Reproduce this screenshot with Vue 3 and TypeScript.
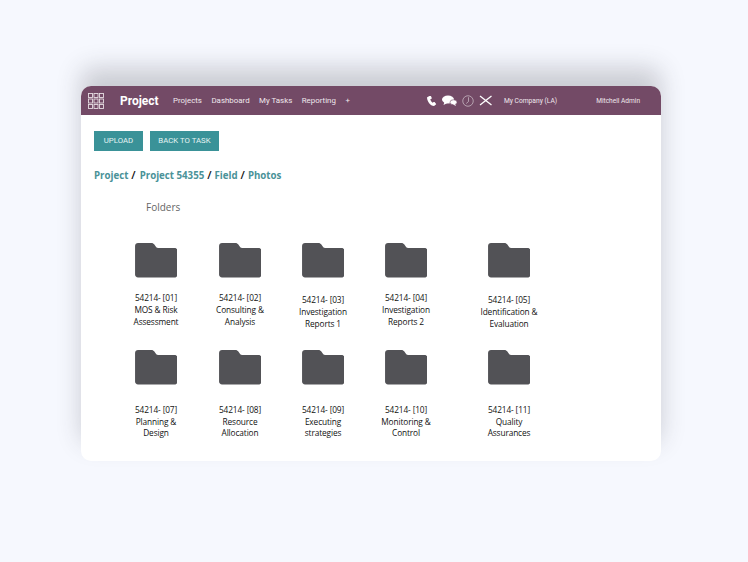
<script setup lang="ts">
interface Folder {
  code: string;
  lines: string[];
  shift?: boolean;
}

const navLinks = ["Projects", "Dashboard", "My Tasks", "Reporting", "+"];

const folders: Folder[] = [
  { code: "54214- [01]", lines: ["MOS & Risk", "Assessment"] },
  { code: "54214- [02]", lines: ["Consulting &", "Analysis"] },
  { code: "54214- [03]", lines: ["Investigation", "Reports 1"], shift: true },
  { code: "54214- [04]", lines: ["Investigation", "Reports 2"] },
  { code: "54214- [05]", lines: ["Identification &", "Evaluation"], shift: true },
  { code: "54214- [07]", lines: ["Planning &", "Design"] },
  { code: "54214- [08]", lines: ["Resource", "Allocation"] },
  { code: "54214- [09]", lines: ["Executing", "strategies"] },
  { code: "54214- [10]", lines: ["Monitoring &", "Control"] },
  { code: "54214- [11]", lines: ["Quality", "Assurances"] },
];
</script>

<template>
  <div class="page">
    <div class="card">
      <header class="navbar">
        <svg class="apps" width="16" height="16" viewBox="0 0 16 16" fill="none" stroke="#e6dde3" stroke-width="0.9" aria-hidden="true">
          <template v-for="row in 3" :key="row">
            <rect v-for="col in 3" :key="col" :x="0.5 + (col - 1) * 5.5" :y="0.5 + (row - 1) * 5.5" width="4" height="4" />
          </template>
        </svg>
        <span class="brand">Project</span>
        <nav class="links">
          <a v-for="link in navLinks" :key="link">{{ link }}</a>
        </nav>
        <div class="tools">
          <svg width="11" height="12" viewBox="0 0 24 24" fill="#fff" aria-hidden="true">
            <path d="M6.6 1.5 2.4 3.6C1.4 11.5 9.5 22.3 17.6 23l4-3.2c.6-.5.7-1.2.2-1.8l-3.2-3.6c-.5-.5-1.2-.6-1.8-.2l-2.4 1.6c-2.4-1.4-4.4-4.6-5-7.4l2.5-1.3c.6-.3.9-1 .7-1.6L11 1.9c-.6-1-3.4-1-4.4-.4z" />
          </svg>
          <svg width="15" height="11" viewBox="0 0 30 22" fill="#fff" aria-hidden="true">
            <ellipse cx="12" cy="9" rx="12" ry="8" />
            <path d="M5 14 3 20l8-4z" />
            <ellipse cx="23" cy="14.5" rx="7" ry="5" stroke="#734a66" stroke-width="1.2" />
            <path d="M26 18l2 4-6-3z" />
          </svg>
          <svg width="12" height="12" viewBox="0 0 24 24" fill="none" stroke="#d9cdd5" stroke-width="1.3" aria-hidden="true">
            <circle cx="12" cy="12" r="10.5" />
            <path d="M13 4.5V13l-4.5 4" />
          </svg>
          <svg width="14" height="11" viewBox="0 0 28 22" fill="none" stroke="#fff" stroke-width="2.6" aria-hidden="true">
            <path d="M2 2 25 20" />
            <path d="M2 20 25 2" />
          </svg>
        </div>
        <span class="company">My Company (LA)</span>
        <span class="user">Mitchell Admin</span>
      </header>

      <main class="content">
        <div class="actions">
          <button type="button" class="btn upload">UPLOAD</button>
          <button type="button" class="btn">BACK TO TASK</button>
        </div>

        <div class="crumbs">
          <a>Project</a><span class="sep first">/</span>
          <a>Project 54355</a><span class="sep">/</span>
          <a>Field</a><span class="sep">/</span>
          <a>Photos</a>
        </div>

        <h2 class="heading">Folders</h2>

        <div class="folders">
          <div v-for="folder in folders" :key="folder.code" class="folder">
            <svg class="folder-icon" width="42.5" height="34.5" viewBox="0 0 43 35" aria-hidden="true">
              <path
                d="M3 0H16.5C18 0 18.8.6 19.6 1.6L21.5 4.2C22 4.8 22.6 5 23.4 5H40C41.7 5 43 6.3 43 8V32C43 33.7 41.7 35 40 35H3C1.3 35 0 33.7 0 32V3C0 1.3 1.3 0 3 0Z"
                fill="#525256"
              />
            </svg>
            <div class="label" :class="{ shifted: folder.shift }">
              <div>{{ folder.code }}</div>
              <div v-for="line in folder.lines" :key="line">{{ line }}</div>
            </div>
          </div>
        </div>
      </main>
    </div>
  </div>
</template>

<style scoped>
.page {
  width: 748px;
  height: 562px;
  box-sizing: border-box;
  padding: 86px 87px 0 81px;
  background: #f6f8fe;
  overflow: hidden;
}

.card {
  height: 375px;
  background: #fff;
  border-radius: 10px;
  box-shadow: 0 -18px 24px rgba(50, 50, 60, 0.22);
  overflow: hidden;
}

.navbar {
  display: flex;
  align-items: center;
  height: 29px;
  padding-left: 7px;
  background: #734a66;
  color: #fff;
  font-family: Roboto, "Liberation Sans", sans-serif;
}

.apps {
  flex-shrink: 0;
}

.brand {
  margin-left: 16px;
  font-size: 12px;
  font-weight: 700;
  width: 53px;
}

.links {
  display: flex;
  gap: 9.5px;
  font-size: 7.9px;
  color: #f0e8ed;
}

.tools {
  display: flex;
  align-items: center;
  gap: 5px;
  margin-left: 76px;
}

.company {
  margin-left: 11px;
  font-size: 6.7px;
  color: #f0e8ed;
}

.user {
  margin-left: 39px;
  font-size: 6.6px;
  color: #f0e8ed;
}

.content {
  padding: 16px 0 0 13px;
  font-family: "Open Sans", "Liberation Sans", sans-serif;
}

.actions {
  display: flex;
  gap: 7px;
}

.btn {
  height: 20px;
  padding: 0 0 1px;
  width: 49px;
  border: 0;
  background: #3a9298;
  color: #e6f4f4;
  font-family: Roboto, "Liberation Sans", sans-serif;
  font-size: 7.8px;
}

.btn:not(.upload) {
  width: 69px;
}

.crumbs {
  margin-top: 17px;
  font-size: 9.7px;
  line-height: 14px;
  font-weight: 700;
  color: #4a9298;
}

.sep {
  margin: 0 3px;
  color: #111;
  font-size: 11px;
  font-weight: 600;
}

.sep.first {
  margin-right: 4px;
}

.heading {
  margin: 17px 0 0 52px;
  font-size: 10px;
  line-height: 14px;
  font-weight: 400;
  color: #666;
}

.folders {
  display: grid;
  grid-template-columns: 84px 84px 82px 84px 122px;
  grid-auto-rows: 107.2px;
  margin: 29.3px 0 0 20px;
}

.folder {
  display: flex;
  flex-direction: column;
  align-items: center;
}

.folder-icon {
  flex-shrink: 0;
}

.label {
  margin-top: 14px;
  font-size: 8.3px;
  letter-spacing: -0.12px;
  line-height: 12.3px;
  text-align: center;
  color: #111;
  white-space: nowrap;
}

.label.shifted {
  margin-top: 16px;
}

.folder:nth-child(n + 6) .label {
  margin-top: 19px;
  line-height: 11.7px;
}
</style>

<style>
html,
body {
  margin: 0;
  background: #f6f8fe;
}
</style>
